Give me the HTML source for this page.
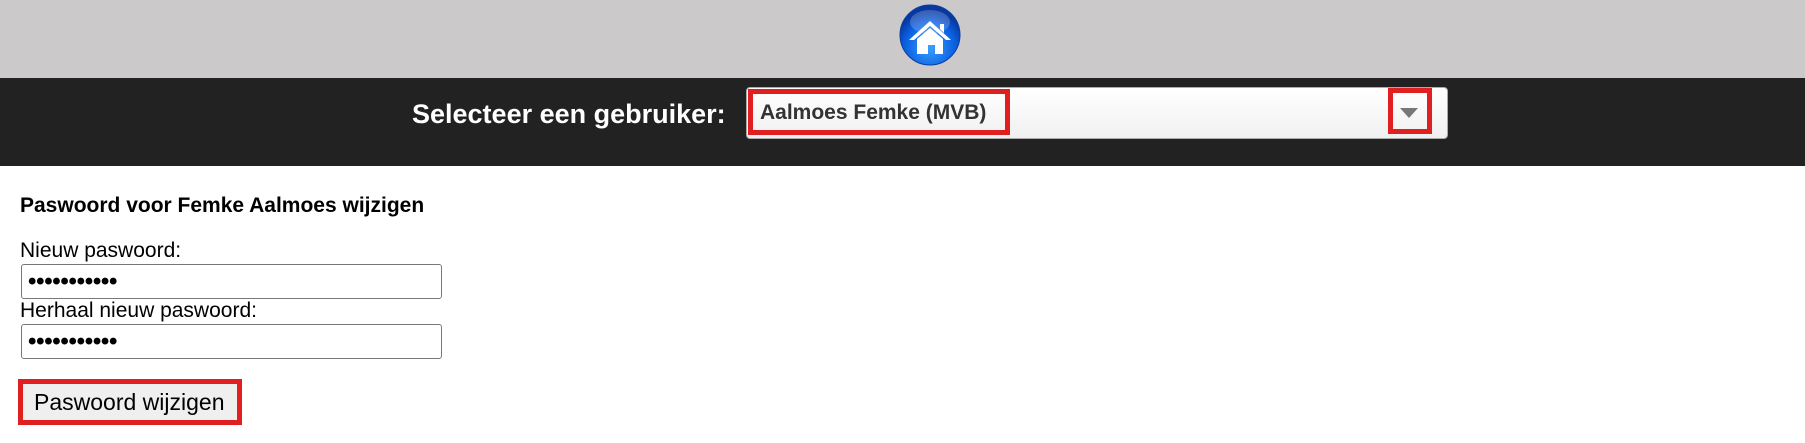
<!DOCTYPE html>
<html><head><meta charset="utf-8"><style>
body{margin:0;width:1805px;height:443px;background:#fff;font-family:"Liberation Sans",Arial,sans-serif;position:relative;overflow:hidden}
.top{position:absolute;left:0;top:0;width:1805px;height:78px;background:#cbc9ca}
.bar{position:absolute;left:0;top:78px;width:1805px;height:88px;background:#222}
.lbl{position:absolute;left:412px;top:99px;color:#fff;font-weight:bold;font-size:27px}
.sel{position:absolute;left:746px;top:87px;width:700px;height:50px;background:linear-gradient(#fff,#f0f0f0);border-radius:4px;border:1px solid #aaa}
.r{position:absolute;border:5px solid #e02020;box-sizing:border-box}
.seltxt{position:absolute;left:760px;top:101px;font-weight:bold;font-size:21px;color:#333}
.tri{position:absolute;left:1400px;top:108px;width:0;height:0;border-left:9px solid transparent;border-right:9px solid transparent;border-top:10px solid #777}
h3{position:absolute;left:20px;top:194px;margin:0;font-size:21px;font-weight:bold}
.t{position:absolute;left:20px;font-size:21px;color:#000}
.in{position:absolute;left:21px;width:421px;height:35px;border:1px solid #777;border-radius:3px;box-sizing:border-box}
.dots{position:absolute;left:6px;top:3px;font-size:24px;letter-spacing:-0.3px;font-weight:bold}
.btn{position:absolute;left:23px;top:384px;width:214px;height:36px;background:#efefef;font-size:23px;line-height:36px;padding-left:11px;box-sizing:border-box}
</style></head><body>
<div class="top"></div>
<svg style="position:absolute;left:898px;top:3px" width="64" height="64" viewBox="0 0 64 64">
<defs><radialGradient id="g" cx="50%" cy="70%" r="60%"><stop offset="0" stop-color="#3aa0ff"/><stop offset="0.7" stop-color="#0a5fe0"/><stop offset="1" stop-color="#0838a0"/></radialGradient></defs>
<circle cx="32" cy="32" r="30" fill="url(#g)" stroke="#0a3fa0" stroke-width="1"/>
<ellipse cx="32" cy="19" rx="20" ry="12" fill="#fff" opacity="0.2"/>
<path d="M11 37 L32 18 L53 37 L48 37 L32 23 L16 37Z M42 21 L46 21 L46 30 L42 26Z" fill="#fff"/>
<path d="M19 36 L32 25 L45 36 L45 51 L37 51 L37 42 L30 42 L30 51 L19 51Z" fill="#fff"/>
</svg>
<div class="bar"></div>
<div class="lbl">Selecteer een gebruiker:</div>
<div class="sel"></div>
<div class="seltxt">Aalmoes Femke (MVB)</div>
<div class="r" style="left:748px;top:89px;width:262px;height:46px"></div>
<div class="r" style="left:1388px;top:88px;width:44px;height:46px"></div>
<div class="tri"></div>
<h3>Paswoord voor Femke Aalmoes wijzigen</h3>
<div class="t" style="top:239px">Nieuw paswoord:</div>
<div class="in" style="top:264px"><span class="dots">•••••••••••</span></div>
<div class="t" style="top:299px">Herhaal nieuw paswoord:</div>
<div class="in" style="top:324px"><span class="dots">•••••••••••</span></div>
<div class="r" style="left:18px;top:379px;width:224px;height:46px"></div>
<div class="btn">Paswoord wijzigen</div>
</body></html>
